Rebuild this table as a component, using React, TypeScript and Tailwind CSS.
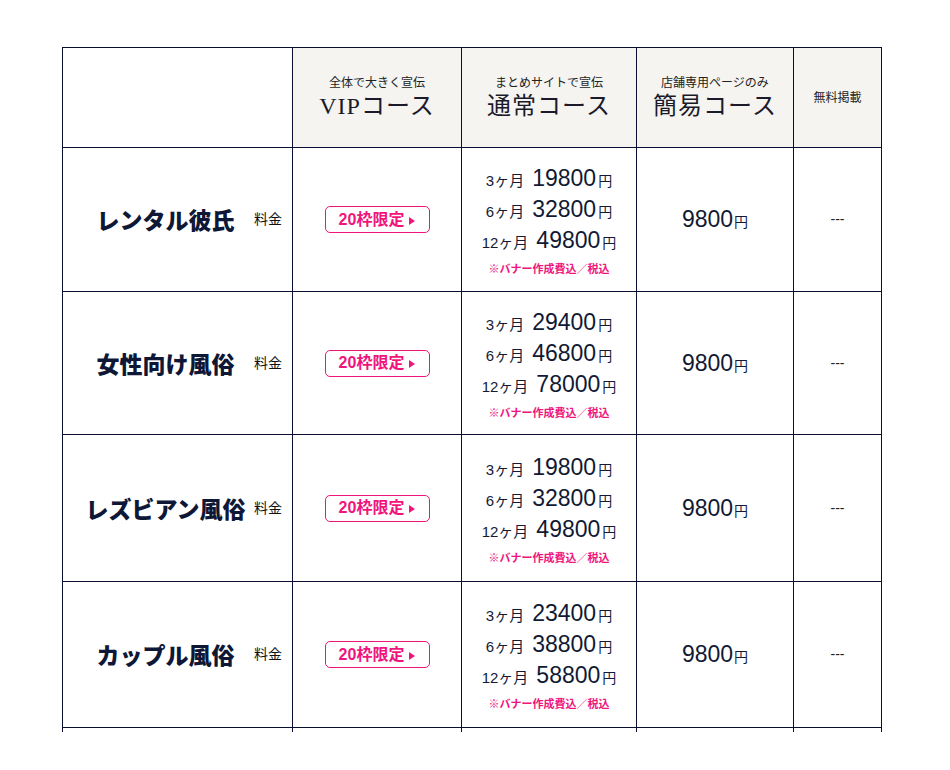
const rows = [
  {
    name: "レンタル彼氏",
    prices: ["19800", "32800", "49800"],
    h: "h-[144px]",
  },
  {
    name: "女性向け風俗",
    prices: ["29400", "46800", "78000"],
    h: "h-[143px]",
  },
  {
    name: "レズビアン風俗",
    prices: ["19800", "32800", "49800"],
    h: "h-[147px]",
  },
  {
    name: "カップル風俗",
    prices: ["23400", "38800", "58800"],
    h: "h-[146px]",
  },
];

const terms = ["3ヶ月", "6ヶ月", "12ヶ月"];

const cell = "border border-[#0b0e33] align-middle text-center p-0";

const HeadCell = ({ sub, title }: { sub: string; title: string }) => (
  <th className={`${cell} bg-[#f5f4f0] font-normal`}>
    <div className="text-[12px] leading-[16px] text-[#222]">{sub}</div>
    <div
      className="text-[24px] leading-[30px] text-[#1a1a2a] tracking-[1px]"
      style={{ fontFamily: '"Liberation Serif", "Noto Sans CJK JP", serif' }}
    >
      {title}
    </div>
  </th>
);

const Badge = () => (
  <div className="inline-flex items-center gap-[5px] h-[27px] w-[105px] justify-center rounded-[5px] border border-[#f0157d] bg-white text-[#f0157d] text-[16px] font-bold">
    <span>20枠限定</span>
    <svg width="6" height="8" viewBox="0 0 6 8" className="mt-[2px]">
      <path d="M0 0 L6 4 L0 8 Z" fill="#f0157d" />
    </svg>
  </div>
);

export default function App() {
  return (
    <div
      className="w-[950px] h-[770px] bg-white pt-[47px] pl-[62px]"
      style={{ fontFamily: '"Liberation Sans", "Noto Sans CJK JP", sans-serif' }}
    >
      <table className="border-collapse table-fixed w-[819px] text-[#141a36]">
        <colgroup>
          <col className="w-[230px]" />
          <col className="w-[169px]" />
          <col className="w-[175px]" />
          <col className="w-[157px]" />
          <col className="w-[88px]" />
        </colgroup>
        <thead>
          <tr className="h-[100px]">
            <th className={`${cell} bg-white`} />
            <HeadCell sub="全体で大きく宣伝" title="VIPコース" />
            <HeadCell sub="まとめサイトで宣伝" title="通常コース" />
            <HeadCell sub="店舗専用ページのみ" title="簡易コース" />
            <th className={`${cell} bg-[#f5f4f0] font-normal text-[12px] text-[#222]`}>
              無料掲載
            </th>
          </tr>
        </thead>
        <tbody>
          {rows.map((r) => (
            <tr key={r.name} className={r.h}>
              <td className={cell}>
                <div className="flex items-center pl-[14px] pr-[10px]">
                  <div
                    className="flex-1 text-center text-[23px] font-black text-[#0e1736]"
                    style={{ fontFamily: '"Noto Sans CJK JP", sans-serif' }}
                  >
                    {r.name}
                  </div>
                  <div className="text-[14px] text-[#111] w-[28px] text-right">料金</div>
                </div>
              </td>
              <td className={cell}>
                <Badge />
              </td>
              <td className={cell}>
                <div className="flex flex-col items-center pt-[4px]">
                  {r.prices.map((p, i) => (
                    <div key={i} className="h-[31px] flex items-baseline leading-none">
                      <span className="text-[15px] mr-[8px]">{terms[i]}</span>
                      <span className="text-[23px] text-[#111a33]">{p}</span>
                      <span className="text-[14px] ml-[2px]">円</span>
                    </div>
                  ))}
                  <div className="text-[11px] font-bold text-[#f0157d] mt-[2px] leading-[14px]">
                    ※バナー作成費込／税込
                  </div>
                </div>
              </td>
              <td className={cell}>
                <span className="text-[23px] text-[#111a33]">9800</span>
                <span className="text-[14px] ml-[1px]">円</span>
              </td>
              <td className={`${cell} text-[14px] text-[#222]`}>---</td>
            </tr>
          ))}
          <tr className="h-[4px]">
            <td className="border-x border-[#0b0e33] p-0" />
            <td className="border-x border-[#0b0e33] p-0" />
            <td className="border-x border-[#0b0e33] p-0" />
            <td className="border-x border-[#0b0e33] p-0" />
            <td className="border-x border-[#0b0e33] p-0" />
          </tr>
        </tbody>
      </table>
    </div>
  );
}
